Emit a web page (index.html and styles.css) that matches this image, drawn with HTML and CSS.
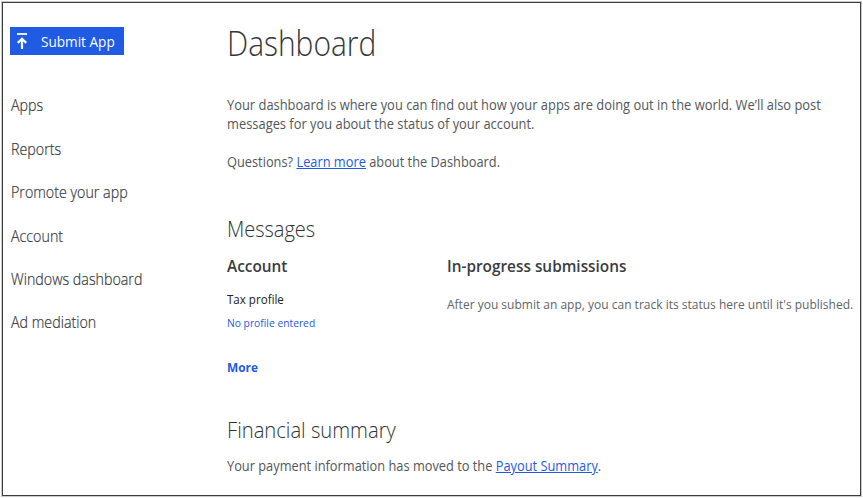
FILE: index.html
```
<!DOCTYPE html>
<html lang="en">
<head>
<meta charset="utf-8">
<title>Dashboard</title>
<link rel="stylesheet" href="styles.css">
</head>
<body>
<div class="frame">
  <aside class="sidebar">
    <button class="submit" type="button">
      <svg class="submit-icon" width="10" height="17" viewBox="0 0 10 17" fill="none" stroke="#fff"><path d="M0 1h10" stroke-width="1.8"/><path d="M5 16V6M.8 9.9L5 5.7l4.2 4.2" stroke-width="2.2"/></svg>
      <span class="submit-label">Submit App</span>
    </button>
    <nav class="nav">
      <a>Apps</a>
      <a>Reports</a>
      <a>Promote your app</a>
      <a>Account</a>
      <a>Windows dashboard</a>
      <a>Ad mediation</a>
    </nav>
  </aside>
  <main class="main">
    <h1>Dashboard</h1>
    <p class="intro">Your dashboard is where you can find out how your apps are doing out in the world. We’ll also post<br>messages for you about the status of your account.</p>
    <p class="questions">Questions? <a class="link">Learn more</a> about the Dashboard.</p>
    <h2 class="messages-title">Messages</h2>
    <div class="columns">
      <section>
        <h3>Account</h3>
        <p class="tax">Tax profile</p>
        <p class="noprofile">No profile entered</p>
        <p class="more">More</p>
      </section>
      <section>
        <h3>In-progress submissions</h3>
        <p class="after">After you submit an app, you can track its status here until it's published.</p>
      </section>
    </div>
    <h2 class="financial-title">Financial summary</h2>
    <p class="payment">Your payment information has moved to the <a class="link">Payout Summary</a>.</p>
  </main>
</div>
</body>
</html>
```
FILE: styles.css
```
* { box-sizing: border-box; }
body {
  margin: 0;
  padding: 2px;
  height: 498px;
  background: #fff;
  color: #54575c;
  font-family: "Open Sans", "Noto Sans", sans-serif;
  font-size: 14px;
  white-space: nowrap;
  overflow: hidden;
}
h1, h2, h3, p { margin: 0; }
/* Narrow the letterforms slightly */
h1, h2, h3, p, .nav a, .submit-label {
  width: fit-content;
  transform: scaleX(var(--narrow, .915));
  transform-origin: 0 50%;
}
.frame {
  display: grid;
  grid-template-columns: 224px 1fr;
  width: 859px;
  height: 494px;
  border: 1px solid #3c3d40;
  box-shadow: 0 0 0 1px #c9cacc;
}
.sidebar { padding: 24px 0 0 7px; }
.submit {
  display: flex;
  align-items: center;
  width: 114px;
  height: 28px;
  padding: 0 0 0 7px;
  border: 0;
  background: #1f5be3;
  color: #fff;
  font-family: inherit;
  font-size: 14.5px;
  line-height: 28px;
}
.submit-label { --narrow: .937; margin-left: 14px; padding-top: 1px; }
.nav {
  --narrow: .92;
  display: grid;
  grid-auto-rows: 43.4px;
  margin-top: 29.4px;
  padding-left: .5px;
  font-size: 15.5px;
  font-weight: 300;
  line-height: 43px;
  color: #36383d;
  -webkit-text-stroke: .2px #36383d;
}
.main { min-width: 0; }
h1 { --narrow: .88; margin-top: 17px; font-size: 34px; line-height: 46px; font-weight: 300; color: #36373b; }
.intro { --narrow: .921; margin-top: 29px; line-height: 19px; }
.questions { margin-top: 19px; line-height: 19px; }
h2 { font-size: 22px; line-height: 30px; font-weight: 300; color: #303135; }
.messages-title { --narrow: .908; margin-top: 42px; }
.columns { display: grid; grid-template-columns: 220px 1fr; height: 136px; margin-top: 12px; }
h3 { --narrow: .96; font-size: 16px; line-height: 22px; font-weight: 600; color: #3b3c40; }
.tax { --narrow: .89; margin-top: 12px; line-height: 20px; font-size: 13px; color: #222; }
.noprofile { --narrow: .935; margin-top: 5px; line-height: 18px; font-size: 11px; color: #1f5be3; }
.more { --narrow: .95; margin-top: 26px; line-height: 20px; font-size: 12.5px; font-weight: 700; color: #1f5be3; }
.after { --narrow: .923; margin-top: 17px; line-height: 20px; font-size: 13px; color: #62656a; }
.financial-title { --narrow: .918; margin-top: 23px; }
.payment { margin-top: 12px; line-height: 20px; }
.link { color: #1f5be3; text-decoration: underline; text-underline-offset: 1px; }
```
